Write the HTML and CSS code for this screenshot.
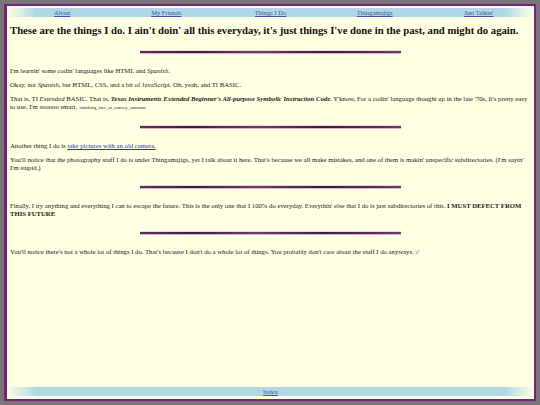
FILE: index.html
```html
<!DOCTYPE html>
<html>
<head>
<meta charset="utf-8">
<link rel="stylesheet" href="styles.css">
</head>
<body>
<div class="page">
  <nav class="bar nav">
    <a href="#">About</a>
    <a href="#">My Friends</a>
    <a href="#">Things I Do</a>
    <a href="#">Thingamajigs</a>
    <a href="#">Just Talkin'</a>
  </nav>
  <main class="content">
    <h1>These are the things I do. I ain't doin' all this everyday, it's just things I've done in the past, and might do again.</h1>
    <hr class="rule">
    <p>I'm learnin' some codin' languages like HTML and <i>Spanish</i>.</p>
    <p>Okay, not <i>Spanish</i>, but HTML, CSS, and a bit of JavaScript. Oh, yeah, and TI BASIC.</p>
    <p>That is, TI <i>Extended</i> BASIC. That is, <b><i>Texas Instruments Extended Beginner's All-purpose Symbolic Instruction Code.</i></b> Y'know, For a codin' language thought up in the late '70s, It's pretty easy to use. I'm <i class="soo">sooooo</i> smart. <small class="emoji">:smirking_face_to_convey_sarcasm:</small></p>
    <hr class="rule">
    <p>Another thing I do is <a href="#">take pictures with an old camera.</a></p>
    <p>You'll notice that the photography stuff I do is under Thingamajigs, yet I talk about it here. That's because we all make mistakes, and one of them is makin' unspecific subdirectories. (I'm sayin' I'm stupid.)</p>
    <hr class="rule">
    <p>Finally, I try anything and everything I can to escape the future. This is the only one that I 100% do everyday. Everythin' else that I do is just subdirectories of this. <b>I MUST DEFECT FROM THIS FUTURE</b></p>
    <hr class="rule">
    <p>You'll notice there's not a whole lot of things I do. That's because I don't do a whole lot of things. You probably don't care about the stuff I do anyways. :/</p>
  </main>
  <footer class="bar foot">
    <a href="#">Index</a>
  </footer>
</div>
</body>
</html>
```
FILE: styles.css
```css
html, body {
  margin: 0;
  padding: 0;
}
body {
  background: #777777;
  font-family: "Liberation Serif", "Times New Roman", serif;
  color: #1a1a1a;
}
.page {
  margin: 4px;
  height: 397px;
  box-sizing: border-box;
  border: 2px solid #7a1f7a;
  border-left-width: 3px;
  background: #ffffe3;
  padding: 2px 3px 3px 3px;
  display: flex;
  flex-direction: column;
}
.bar {
  height: 9px;
  background: linear-gradient(90deg, rgba(173,216,230,0.12) 0%, rgba(173,216,230,0.6) 3%, #add8e6 5%, #add8e6 95%, rgba(173,216,230,0.6) 97%, rgba(173,216,230,0.12) 100%);
  font-size: 6.5px;
  line-height: 9px;
}
.bar a {
  color: #4d4da3;
}
.nav {
  display: grid;
  grid-template-columns: repeat(5, 1fr);
  text-align: center;
}
.foot {
  margin-top: auto;
  text-align: center;
}
.content {
  padding: 0;
}
h1 {
  font-size: 10.7px;
  margin: 7px 0 15px;
  line-height: 12px;
  color: #111;
  white-space: nowrap;
}
.rule {
  width: 50%;
  height: 2px;
  border: 0;
  margin: 14px auto;
  background: linear-gradient(90deg, #5e2f5e, #3f1c3f 20%, #6e3a6e 45%, #3f1c3f 70%, #5a2a5a 90%, #6e3a6e);
  box-shadow: 0 1px 0 rgba(190,130,190,0.6), 0 -1px 0 rgba(210,170,210,0.45);
}
p {
  font-size: 6.7px;
  line-height: 8px;
  margin: 6px 0;
}
.emoji {
  font-size: 4.6px;
}
a {
  color: #2a2acc;
}
```
